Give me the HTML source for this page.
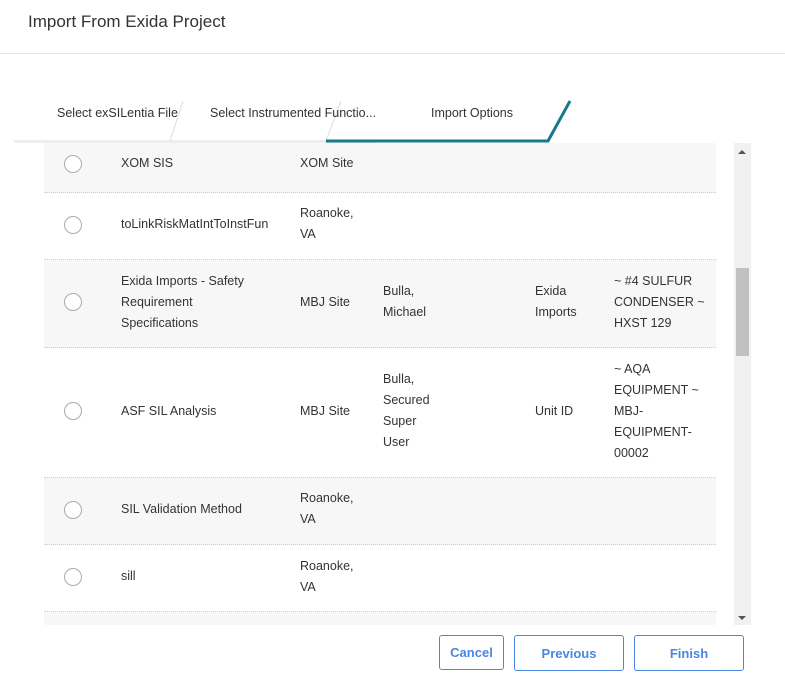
<!DOCTYPE html><html><head><style>
body{margin:0;width:785px;height:688px;background:#fff;font-family:"Liberation Sans",sans-serif;color:#333;position:relative;overflow:hidden}
.t{position:absolute;font-size:12.5px;line-height:21px}
.row{position:absolute;left:44px;width:672px;border-bottom:1px dotted #ccc;box-sizing:border-box}
.g{background:#f7f7f7}
.r{position:absolute;left:64px;width:18px;height:18px;border:1px solid #aaa;border-radius:50%;background:#fff;box-sizing:border-box}
.btn{position:absolute;top:635px;height:36px;border:1px solid #4a86e0;border-radius:3px;color:#4a86e0;font-weight:bold;font-size:13px;display:flex;align-items:center;justify-content:center;box-sizing:border-box}
</style></head><body>
<div style="position:absolute;left:28px;top:12px;font-size:17px;color:#333">Import From Exida Project</div>
<div style="position:absolute;left:0;top:53px;width:785px;height:1px;background:#e6e6e6"></div>
<div style="position:absolute;left:14px;top:140px;width:360px;height:3px;background:#eee"></div>
<svg style="position:absolute;left:0;top:95px" width="600" height="50"><line x1="183" y1="6" x2="170" y2="46" stroke="#ddd"/><line x1="341" y1="6" x2="326" y2="46" stroke="#ddd"/><polyline points="326,46 548,46 570,6" fill="none" stroke="#157a8c" stroke-width="3"/></svg>
<div class="t" style="left:57px;top:103px">Select exSILentia File</div>
<div class="t" style="left:210px;top:103px">Select Instrumented Functio...</div>
<div class="t" style="left:431px;top:103px">Import Options</div>
<div class="row g" style="top:143px;height:50px"></div>
<div class="row" style="top:193px;height:67px"></div>
<div class="row g" style="top:260px;height:88px"></div>
<div class="row" style="top:348px;height:130px"></div>
<div class="row g" style="top:478px;height:67px"></div>
<div class="row" style="top:545px;height:67px"></div>
<div class="row g" style="top:612px;height:13px;border:none"></div>
<div class="r" style="top:155px"></div><div class="r" style="top:216px"></div><div class="r" style="top:293px"></div><div class="r" style="top:402px"></div><div class="r" style="top:501px"></div><div class="r" style="top:568px"></div>
<div class="t" style="left:121px;top:153px">XOM SIS</div><div class="t" style="left:300px;top:153px">XOM Site</div>
<div class="t" style="left:121px;top:214px">toLinkRiskMatIntToInstFun</div><div class="t" style="left:300px;top:203px">Roanoke,<br>VA</div>
<div class="t" style="left:121px;top:271px">Exida Imports - Safety<br>Requirement<br>Specifications</div><div class="t" style="left:300px;top:292px">MBJ Site</div><div class="t" style="left:383px;top:281px">Bulla,<br>Michael</div><div class="t" style="left:535px;top:281px">Exida<br>Imports</div><div class="t" style="left:614px;top:271px">~ #4 SULFUR<br>CONDENSER ~<br>HXST 129</div>
<div class="t" style="left:121px;top:401px">ASF SIL Analysis</div><div class="t" style="left:300px;top:401px">MBJ Site</div><div class="t" style="left:383px;top:369px">Bulla,<br>Secured<br>Super<br>User</div><div class="t" style="left:535px;top:401px">Unit ID</div><div class="t" style="left:614px;top:359px">~ AQA<br>EQUIPMENT ~<br>MBJ-<br>EQUIPMENT-<br>00002</div>
<div class="t" style="left:121px;top:499px">SIL Validation Method</div><div class="t" style="left:300px;top:488px">Roanoke,<br>VA</div>
<div class="t" style="left:121px;top:566px">sill</div><div class="t" style="left:300px;top:556px">Roanoke,<br>VA</div>
<div style="position:absolute;left:734px;top:143px;width:17px;height:482px;background:#f1f1f1"></div>
<div style="position:absolute;left:736px;top:268px;width:13px;height:88px;background:#c1c1c1"></div>
<div style="position:absolute;left:738px;top:150px;border:4px solid transparent;border-bottom:4px solid #555;border-top:0"></div>
<div style="position:absolute;left:738px;top:616px;border:4px solid transparent;border-top:4px solid #555;border-bottom:0"></div>
<div class="btn" style="left:439px;width:65px;height:35px">Cancel</div>
<div class="btn" style="left:514px;width:110px">Previous</div>
<div class="btn" style="left:634px;width:110px">Finish</div>
</body></html>
